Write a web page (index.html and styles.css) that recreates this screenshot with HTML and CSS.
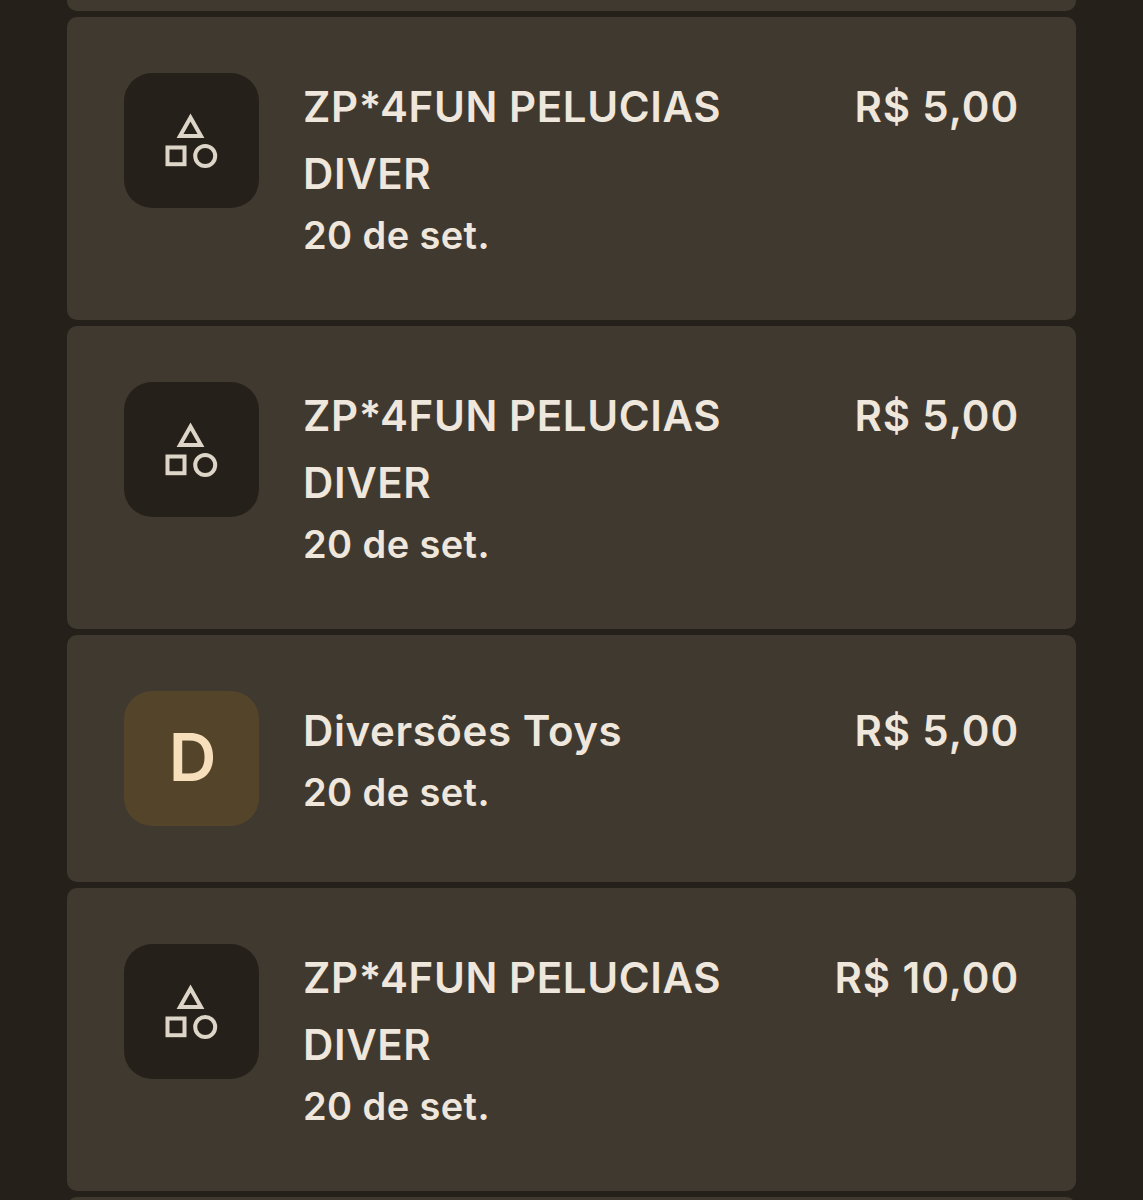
FILE: index.html
```html
<!DOCTYPE html>
<html lang="pt-BR">
<head>
  <meta charset="UTF-8" />
  <meta name="viewport" content="width=device-width, initial-scale=1" />
  <title>Atividade</title>
  <link rel="stylesheet" href="styles.css">
</head>
<body>
  <div class="list">
    <div class="stub stub-top"></div>

    <div class="item">
      <div class="thumb">
        <svg class="shapes" viewBox="0 0 54 56"><path d="M25.5 4.5 L36 23.1 H15 Z"/><rect x="2.5" y="34.5" width="17" height="16.7"/><circle cx="40.2" cy="43" r="10"/></svg>
      </div>
      <div class="body">
        <div class="info">
          <div class="name">ZP*4FUN PELUCIAS DIVER</div>
          <div class="date">20 de set.</div>
        </div>
        <div class="amount">R$ 5,00</div>
      </div>
    </div>

    <div class="item">
      <div class="thumb">
        <svg class="shapes" viewBox="0 0 54 56"><path d="M25.5 4.5 L36 23.1 H15 Z"/><rect x="2.5" y="34.5" width="17" height="16.7"/><circle cx="40.2" cy="43" r="10"/></svg>
      </div>
      <div class="body">
        <div class="info">
          <div class="name">ZP*4FUN PELUCIAS DIVER</div>
          <div class="date">20 de set.</div>
        </div>
        <div class="amount">R$ 5,00</div>
      </div>
    </div>

    <div class="item">
      <div class="thumb letter">D</div>
      <div class="body">
        <div class="info">
          <div class="name">Diversões Toys</div>
          <div class="date">20 de set.</div>
        </div>
        <div class="amount">R$ 5,00</div>
      </div>
    </div>

    <div class="item">
      <div class="thumb">
        <svg class="shapes" viewBox="0 0 54 56"><path d="M25.5 4.5 L36 23.1 H15 Z"/><rect x="2.5" y="34.5" width="17" height="16.7"/><circle cx="40.2" cy="43" r="10"/></svg>
      </div>
      <div class="body">
        <div class="info">
          <div class="name">ZP*4FUN PELUCIAS DIVER</div>
          <div class="date">20 de set.</div>
        </div>
        <div class="amount">R$ 10,00</div>
      </div>
    </div>

    <div class="stub"></div>
  </div>
</body>
</html>
```

FILE: styles.css
```css
html, body {
  height: 1200px;
  margin: 0;
  overflow: hidden;
}

body {
  font-family: Inter, "Noto Sans", sans-serif;
  background: #25211a;
  color: #efe6dc;
}

.list {
  display: flex;
  flex-direction: column;
  gap: 6px;
  margin: 0 67px;
}

.stub {
  height: 40px;
  background: #403930;
  border-radius: 10px;
}

.stub-top {
  height: 11px;
  border-radius: 0 0 10px 10px;
}

.item {
  display: flex;
  align-items: center;
  background: #403930;
  border-radius: 10px;
  padding: 56px 57px;
}

.thumb {
  flex: none;
  display: flex;
  align-items: center;
  justify-content: center;
  align-self: flex-start;
  width: 135px;
  height: 135px;
  border-radius: 28px;
  background: #25211a;
}

.shapes {
  width: 54px;
  height: 56px;
  fill: none;
  stroke: #ddd5c8;
  stroke-width: 4;
}

.letter {
  box-sizing: border-box;
  padding: 0 0 3px 2px;
  background: #54452a;
  color: #f6dfba;
  font-size: 66px;
  font-weight: 600;
}

.body {
  flex: 1;
  display: flex;
  align-items: flex-start;
  margin-left: 44px;
  min-width: 0;
}

.info {
  flex: 1;
  min-width: 0;
}

.name {
  max-width: 440px;
  font-size: 42px;
  font-weight: 600;
  letter-spacing: 0.6px;
  line-height: 67px;
}

.date {
  font-size: 38px;
  font-weight: 600;
  letter-spacing: 0.4px;
  line-height: 57px;
}

.amount {
  flex: none;
  font-size: 42px;
  font-weight: 600;
  letter-spacing: 0.9px;
  line-height: 67px;
}
```
